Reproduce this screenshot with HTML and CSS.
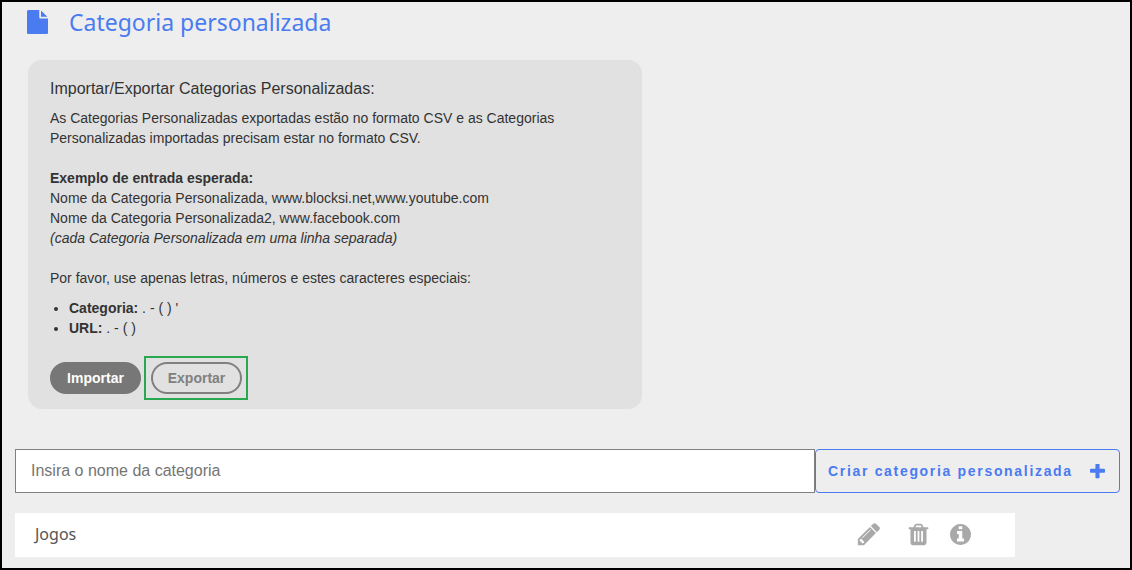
FILE: index.html
```html
<!DOCTYPE html>
<html lang="pt-BR">
<head>
    <meta charset="UTF-8">
    <meta name="viewport" content="width=device-width, initial-scale=1.0">
    <title>Categoria personalizada</title>
    <link rel="stylesheet" href="styles.css">
</head>
<body>
    <div class="page">
        <div class="page-header">
            <svg class="file-icon" viewBox="128 0 1536 1792" preserveAspectRatio="none"><path d="M1152 512v-472q22 14 36 28l408 408q14 14 28 36h-472zm-128 32q0 40 28 68t68 28h544v1056q0 40-28 68t-68 28h-1344q-40 0-68-28t-28-68v-1600q0-40 28-68t68-28h800v544z"/></svg>
            <h1>Categoria personalizada</h1>
        </div>

        <div class="info-box">
            <h2>Importar/Exportar Categorias Personalizadas:</h2>
            <p>As Categorias Personalizadas exportadas estão no formato CSV e as Categorias<br>Personalizadas importadas precisam estar no formato CSV.</p>
            <p><b>Exemplo de entrada esperada:</b><br>
            Nome da Categoria Personalizada, www.blocksi.net,www.youtube.com<br>
            Nome da Categoria Personalizada2, www.facebook.com<br>
            <i>(cada Categoria Personalizada em uma linha separada)</i></p>
            <p class="chars-note">Por favor, use apenas letras, números e estes caracteres especiais:</p>
            <ul>
                <li><b>Categoria:</b> . - ( ) '</li>
                <li><b>URL:</b> . - ( )</li>
            </ul>
            <div class="actions">
                <button class="btn btn-solid">Importar</button>
                <div class="highlight">
                    <button class="btn btn-outline">Exportar</button>
                </div>
            </div>
        </div>

        <div class="create-row">
            <input type="text" class="name-input" placeholder="Insira o nome da categoria">
            <button class="create-btn">
                Criar categoria personalizada
                <svg class="plus-icon" viewBox="192 192 1408 1408"><path d="M1600 736v192q0 40-28 68t-68 28h-416v416q0 40-28 68t-68 28h-192q-40 0-68-28t-28-68v-416h-416q-40 0-68-28t-28-68v-192q0-40 28-68t68-28h416v-416q0-40 28-68t68-28h192q40 0 68 28t28 68v416h416q40 0 68 28t28 68z"/></svg>
            </button>
        </div>

        <div class="category-row">
            <span class="category-name">Jogos</span>
            <div class="row-icons">
                <svg class="row-icon icon-pencil" viewBox="0 0 1792 1792"><path d="M491 1536l91-91-235-235-91 91v107h128v128h107zm523-928q0-22-22-22-10 0-17 7l-542 542q-7 7-7 17 0 22 22 22 10 0 17-7l542-542q7-7 7-17zm-54-192l416 416-832 832h-416v-416zm683 96q0 53-37 90l-166 166-416-416 166-165q36-38 90-38 53 0 91 38l235 234q37 39 37 91z"/></svg>
                <svg class="row-icon icon-trash" viewBox="0 0 1792 1792"><path d="M704 1376v-704q0-14-9-23t-23-9h-64q-14 0-23 9t-9 23v704q0 14 9 23t23 9h64q14 0 23-9t9-23zm256 0v-704q0-14-9-23t-23-9h-64q-14 0-23 9t-9 23v704q0 14 9 23t23 9h64q14 0 23-9t9-23zm256 0v-704q0-14-9-23t-23-9h-64q-14 0-23 9t-9 23v704q0 14 9 23t23 9h64q14 0 23-9t9-23zm-544-992h448l-48-117q-7-9-17-11h-317q-10 2-17 11zm928 32v64q0 14-9 23t-23 9h-96v948q0 83-47 143.5t-113 60.5h-832q-66 0-113-58.5t-47-141.5v-952h-96q-14 0-23-9t-9-23v-64q0-14 9-23t23-9h309l70-167q15-37 54-63t79-26h320q40 0 79 26t54 63l70 167h309q14 0 23 9t9 23z"/></svg>
                <svg class="row-icon icon-info" viewBox="128 128 1536 1536"><path d="M1152 1376v-160q0-14-9-23t-23-9h-96v-512q0-14-9-23t-23-9h-320q-14 0-23 9t-9 23v160q0 14 9 23t23 9h96v320h-96q-14 0-23 9t-9 23v160q0 14 9 23t23 9h448q14 0 23-9t9-23zm-128-896v-160q0-14-9-23t-23-9h-192q-14 0-23 9t-9 23v160q0 14 9 23t23 9h192q14 0 23-9t9-23zm640 416q0 209-103 385.5t-279.5 279.5-385.5 103-385.5-103-279.5-279.5-103-385.5 103-385.5 279.5-279.5 385.5-103 385.5 103 279.5 279.5 103 385.5z"/></svg>
            </div>
        </div>
    </div>
</body>
</html>
```

FILE: styles.css
```css
* {
    margin: 0;
    padding: 0;
    box-sizing: border-box;
}

body {
    font-family: "Liberation Sans", Arial, sans-serif;
    background-color: #000;
    overflow: hidden;
}

.page {
    width: 1132px;
    height: 570px;
    border: 2px solid #000;
    background-color: #eee;
    padding: 0 10px 0 13px;
    overflow: hidden;
}

.page-header {
    display: flex;
    align-items: center;
    height: 42px;
    padding: 0 0 2px 12px;
}

.file-icon {
    width: 21px;
    height: 24px;
    fill: #4a7bf0;
    margin-right: 21px;
}

h1 {
    font-family: "Noto Sans", sans-serif;
    font-weight: 400;
    font-size: 23px;
    line-height: 30px;
    margin-bottom: 1px;
    color: #4a7bf0;
}

.info-box {
    width: 614px;
    height: 349px;
    margin: 16px 0 0 13px;
    padding: 19px 22px 0;
    background-color: #e1e1e1;
    border-radius: 14px;
    color: #333;
    font-size: 14px;
    line-height: 20px;
}

h2 {
    font-weight: 400;
    font-size: 16px;
    line-height: 20px;
    margin-bottom: 9px;
}

.info-box p {
    margin-bottom: 20px;
}

.info-box .chars-note {
    margin-bottom: 10px;
}

.info-box ul {
    padding-left: 19px;
}

.actions {
    display: flex;
    align-items: center;
    margin-top: 18px;
}

.btn {
    width: 91px;
    height: 32px;
    border-radius: 16px;
    font-family: "Liberation Sans", Arial, sans-serif;
    font-size: 14px;
    font-weight: bold;
    cursor: pointer;
}

.btn-solid {
    background-color: #777;
    border: 2px solid #777;
    color: #fff;
}

.btn-outline {
    background-color: transparent;
    border: 2px solid #808080;
    color: #808080;
}

.highlight {
    border: 2px solid #2aa84f;
    padding: 4px 4px 4px 5px;
    margin-left: 3px;
}

.create-row {
    display: flex;
    margin-top: 40px;
}

.name-input {
    width: 800px;
    height: 44px;
    padding: 0 15px;
    border: 1px solid #808080;
    background-color: #fff;
    font-family: "Liberation Sans", Arial, sans-serif;
    font-size: 16px;
    outline: none;
}

.name-input::placeholder {
    color: #757575;
}

.create-btn {
    display: flex;
    align-items: center;
    justify-content: space-between;
    width: 305px;
    height: 44px;
    padding: 0 14px 0 12px;
    background-color: transparent;
    border: 1px solid #4a7bf0;
    border-radius: 4px;
    color: #4a7bf0;
    font-family: "Liberation Sans", Arial, sans-serif;
    font-size: 14px;
    font-weight: bold;
    letter-spacing: 1.68px;
    cursor: pointer;
}

.plus-icon {
    width: 15px;
    height: 15px;
    fill: #4a7bf0;
}

.category-row {
    display: flex;
    align-items: center;
    justify-content: space-between;
    width: 1000px;
    height: 44px;
    margin-top: 20px;
    padding: 0 44px 2px 20px;
    background-color: #fff;
}

.category-name {
    font-family: "Noto Sans", sans-serif;
    font-size: 16px;
    color: #555;
}

.row-icons {
    display: flex;
    align-items: center;
}

.row-icon {
    fill: #a9a9a9;
}

.icon-pencil {
    width: 26px;
    height: 26px;
    margin-right: 24px;
}

.icon-trash {
    width: 25px;
    height: 25px;
    margin-right: 19px;
}

.icon-info {
    width: 21px;
    height: 21px;
}
```
